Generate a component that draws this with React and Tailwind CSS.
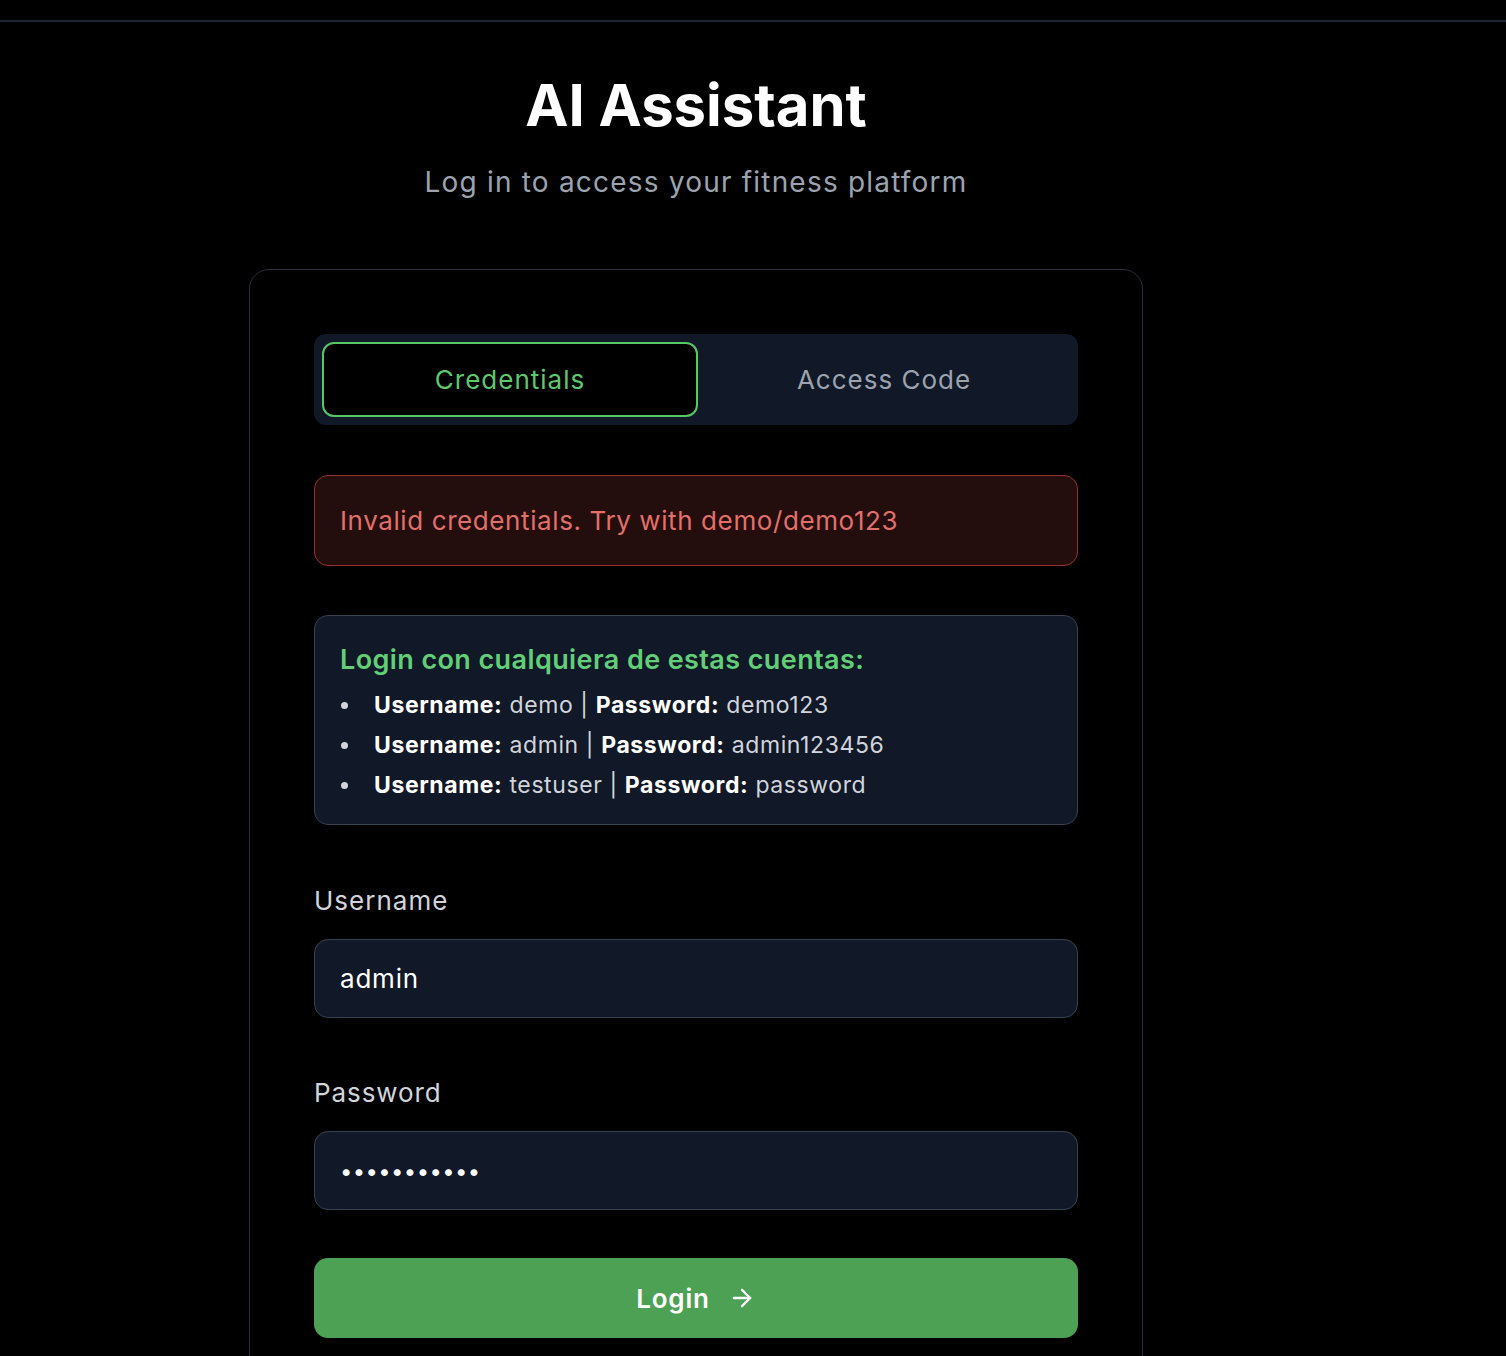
import React from "react";

function ArrowRight() {
  return (
    <svg width="28" height="28" viewBox="0 0 24 24" fill="none" stroke="currentColor" strokeWidth="2" strokeLinecap="round" strokeLinejoin="round">
      <path d="M5 12h14" />
      <path d="m12 5 7 7-7 7" />
    </svg>
  );
}

const accounts = [
  ["demo", "demo123"],
  ["admin", "admin123456"],
  ["testuser", "password"],
];

export default function App() {
  return (
    <div className="min-h-[1356px] w-full bg-black text-white font-['Inter','Noto_Sans',sans-serif]">
      <div className="h-[22px] w-full border-b-2 border-[#1e2530]" />
      <div className="w-[1392px] pt-[54px] flex flex-col items-center">
        <h1 className="text-[58px] leading-[58px] font-bold text-white">AI Assistant</h1>
        <p className="mt-[29px] text-[28px] leading-[39px] tracking-[1.2px] text-[#9ca3af]">Log in to access your fitness platform</p>

        <div className="mt-[67px] w-[894px] rounded-[20px] border border-[#272e3a] p-[64px] pb-[40px]">
          <div className="flex rounded-[12px] bg-[#111827] p-[8px]">
            <button className="flex h-[75px] flex-1 items-center justify-center rounded-[12px] border-2 border-[#55c865] bg-black text-[26px] tracking-[1px] text-[#5cc96a]">
              Credentials
            </button>
            <button className="flex h-[75px] flex-1 items-center justify-center rounded-[12px] text-[26px] tracking-[1px] text-[#9ca3af]">
              Access Code
            </button>
          </div>

          <div className="mt-[50px] rounded-[14px] border border-[#9a302c] bg-[#230d0d] px-[25px] py-[25px] text-[26px] leading-[39px] tracking-[0.6px] text-[#e2706a]">
            Invalid credentials. Try with demo/demo123
          </div>

          <div className="mt-[49px] rounded-[14px] border border-[#374151] bg-[#111827] px-[25px] pt-[24px] pb-[19px]">
            <div className="text-[27px] leading-[39px] font-semibold tracking-[0.4px] text-[#62cf78]">Login con cualquiera de estas cuentas:</div>
            <ul className="mt-[6px]">
              {accounts.map(([u, p]) => (
                <li key={u} className="flex h-[40px] items-center whitespace-pre text-[23px] tracking-[0.6px]">
                  <span className="ml-[1px] mr-[26px] h-[7px] w-[7px] shrink-0 rounded-full bg-[#d1d5db]" />
                  <span className="font-bold text-white">Username:</span>
                  <span className="text-[#d1d5db]">{" " + u + " | "}</span>
                  <span className="font-bold text-white">Password:</span>
                  <span className="text-[#d1d5db]">{" " + p}</span>
                </li>
              ))}
            </ul>
          </div>

          <div className="mt-[56px]">
            <label className="block text-[26px] leading-[39px] tracking-[1px] text-[#d1d5db]">Username</label>
            <input
              readOnly
              value="admin"
              className="mt-[19px] block h-[79px] w-full rounded-[14px] border border-[#374151] bg-[#111827] px-[25px] text-[26px] tracking-[0.8px] text-white outline-none"
            />
          </div>

          <div className="mt-[55px]">
            <label className="block text-[26px] leading-[39px] tracking-[0.9px] text-[#d1d5db]">Password</label>
            <input
              readOnly
              type="password"
              value="admin123456"
              className="mt-[19px] block h-[79px] w-full rounded-[14px] border border-[#374151] bg-[#111827] px-[25px] text-[22px] tracking-[0.4px] text-white outline-none"
            />
          </div>

          <button className="mt-[48px] flex h-[80px] w-full items-center justify-center gap-[18px] rounded-[14px] bg-[#4ca154] text-[26px] font-semibold tracking-[0.8px] text-white">
            <span>Login</span>
            <ArrowRight />
          </button>
        </div>
      </div>
    </div>
  );
}
